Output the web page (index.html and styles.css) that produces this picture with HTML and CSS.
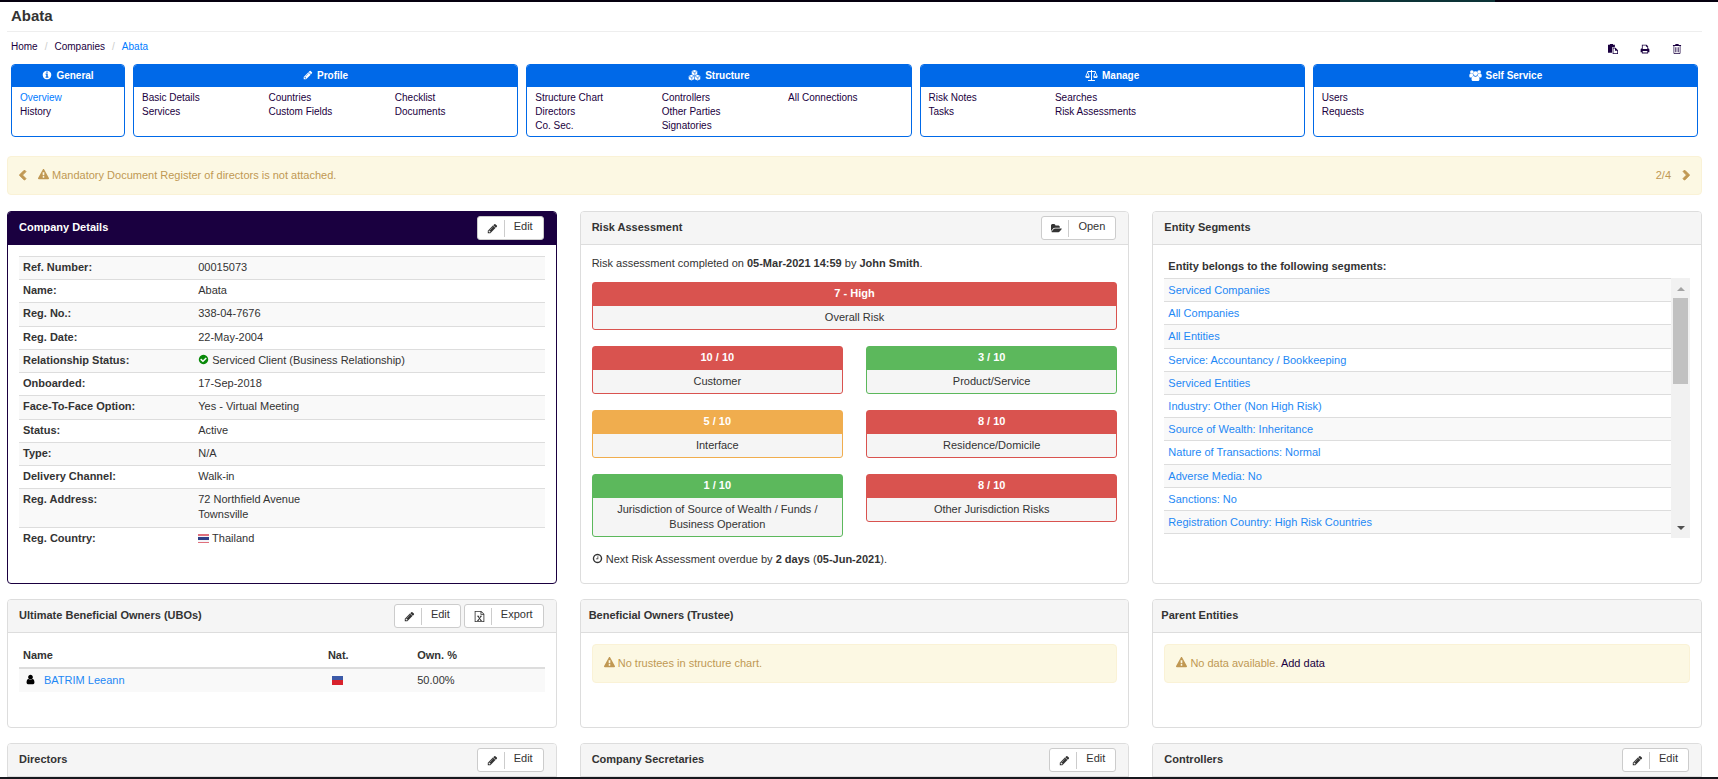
FILE: index.html
```html
<!DOCTYPE html>
<html lang="en">
<head>
  <meta charset="UTF-8" />
  <meta name="viewport" content="width=device-width, initial-scale=1.0"/>
  <title>Abata - Overview</title>
  <link rel="stylesheet" href="styles.css">
</head>
<body>
  <!-- icon set -->
  <svg class="sprite" aria-hidden="true">
    <symbol id="i-pencil" viewBox="0 0 1792 1792"><path d="M491 1536l91-91-235-235-91 91v107h128v128h107zm523-928q0-22-22-22-10 0-17 7l-542 542q-7 7-7 17 0 22 22 22 10 0 17-7l542-542q7-7 7-17zm-54-192l416 416-832 832h-416v-416zm683 96q0 53-37 90l-166 166-416-416 166-165q36-38 90-38 53 0 91 38l235 234q37 39 37 91z"/></symbol>
    <symbol id="i-warning" viewBox="0 0 1792 1792"><path d="M1024 1375v-190q0-14-9.500-23.500t-22.500-9.500h-192q-13 0-22.500 9.500t-9.500 23.500v190q0 14 9.500 23.500t22.500 9.500h192q13 0 22.500-9.500t9.500-23.500zm-2-374l18-459q0-12-10-19-13-11-24-11h-220q-11 0-24 11-10 7-10 21l17 457q0 10 10 16.500t24 6.500h185q14 0 23.500-6.500t10.500-16.500zm-14-934l768 1408q35 63-2 126-17 29-46.500 46t-63.500 17h-1536q-34 0-63.500-17t-46.500-46q-37-63-2-126l768-1408q17-31 47-49t65-18 65 18 47 49z"/></symbol>
    <symbol id="i-info" viewBox="0 0 1792 1792"><path d="M1152 1376v-160q0-14-9-23t-23-9h-96v-512q0-14-9-23t-23-9h-320q-14 0-23 9t-9 23v160q0 14 9 23t23 9h96v320h-96q-14 0-23 9t-9 23v160q0 14 9 23t23 9h448q14 0 23-9t9-23zm-128-896v-160q0-14-9-23t-23-9h-192q-14 0-23 9t-9 23v160q0 14 9 23t23 9h192q14 0 23-9t9-23zm640 416q0 209-103 385.500t-279.500 279.500-385.500 103-385.500-103-279.500-279.500-103-385.500 103-385.500 279.500-279.500 385.500-103 385.500 103 279.500 279.500 103 385.500z"/></symbol>
    <symbol id="i-check" viewBox="0 0 1792 1792"><path d="M1412 734q0-28-18-46l-91-90q-19-19-45-19t-45 19l-408 407-226-226q-19-19-45-19t-45 19l-91 90q-18 18-18 46 0 27 18 45l362 362q19 19 45 19 27 0 46-19l543-543q18-18 18-45zm252 162q0 209-103 385.500t-279.500 279.500-385.500 103-385.500-103-279.500-279.500-103-385.500 103-385.500 279.500-279.500 385.500-103 385.500 103 279.500 279.500 103 385.500z"/></symbol>
    <symbol id="i-clock" viewBox="0 0 1792 1792"><path d="M1024 544v448q0 14-9 23t-23 9h-320q-14 0-23-9t-9-23v-64q0-14 9-23t23-9h224v-352q0-14 9-23t23-9h64q14 0 23 9t9 23zm416 352q0-148-73-273t-198-198-273-73-273 73-198 198-73 273 73 273 198 198 273 73 273-73 198-198 73-273zm224 0q0 209-103 385.500t-279.500 279.500-385.500 103-385.500-103-279.500-279.500-103-385.500 103-385.500 279.500-279.500 385.500-103 385.500 103 279.500 279.500 103 385.500z"/></symbol>
    <symbol id="i-left" viewBox="0 0 1792 1792"><path d="M1427 301l-531 531 531 531q19 19 19 45t-19 45l-166 166q-19 19-45 19t-45-19l-742-742q-19-19-19-45t19-45l742-742q19-19 45-19t45 19l166 166q19 19 19 45t-19 45z"/></symbol>
    <symbol id="i-user" viewBox="0 0 1792 1792"><path d="M1536 1399q0 109-62.500 187t-150.500 78h-854q-88 0-150.500-78t-62.500-187q0-85 8.500-160.500t31.500-152 58.500-131 94-89 134.500-34.500q131 128 313 128t313-128q76 0 134.500 34.500t94 89 58.500 131 31.500 152 8.500 160.500zm-256-887q0 159-112.500 271.500t-271.500 112.500-271.500-112.500-112.500-271.500 112.500-271.500 271.500-112.500 271.500 112.500 112.500 271.500z"/></symbol>
    <symbol id="i-folder" viewBox="0 0 1920 1792"><path d="M1879 952q0 31-31 66l-336 396q-43 51-120.500 86.500t-143.500 35.500h-1088q-34 0-60.500-13t-26.500-43q0-31 31-66l336-396q43-51 120.500-86.500t143.500-35.500h1088q34 0 60.500 13t26.500 43zm-343-344v160h-832q-94 0-197 47.500t-164 119.500l-337 396-5 6v-985q0-92 66-158t158-66h320q92 0 158 66t66 158v32h544q92 0 158 66t66 158z"/></symbol>
    <symbol id="i-cubes" viewBox="0 0 18 16">
      <path d="M9 0l4 1.600v4.600L9 8 5 6.200V1.600z"/><path d="M4.600 7l4 1.700v4.700l-4 2-4-2V8.700z"/><path d="M13.400 7l4 1.700v4.700l-4 2-4-2V8.700z"/>
      <path class="cut" d="M9.500 4.200v2.600M5.100 11.200v2.800M13.900 11.200v2.800M5.800 2.400L9 3.700l3.200-1.300M1.400 9.500l3.200 1.300 3.200-1.300M10.200 9.500l3.200 1.300 3.200-1.300"/>
    </symbol>
    <symbol id="i-scale" viewBox="0 0 18 16"><path d="M8.300 0h1.400v1.500H15v1.200l3 6.600c0 1.600-1.500 2.400-3.200 2.400s-3.200-.8-3.200-2.400l2.600-6.500H9.700v11.700H14V16H4v-1.500h4.300V2.800H3.800l2.600 6.500c0 1.600-1.500 2.400-3.200 2.400S0 10.900 0 9.300l3-6.600V1.500h5.300zM3.200 4.400L1.400 9.200H5zm11.600 0L13 9.200h3.600z"/></symbol>
    <symbol id="i-users" viewBox="0 0 18 16"><circle cx="3.700" cy="2.800" r="2.600"/><circle cx="14.300" cy="2.800" r="2.600"/><circle cx="9" cy="5.200" r="3.400"/><path d="M0 8.400C0 6.300.6 4.900 1.800 5c1 .7 2.300.8 3.300.4C5 6.800 5.500 8 6.300 8.800 4.800 9 3.900 9.800 3.500 11H1.600C.5 11 0 10.100 0 8.400zM18 8.400c0-2.100-.6-3.500-1.800-3.400-1 .7-2.300.8-3.300.4.100 1.400-.4 2.600-1.200 3.400 1.500.2 2.400 1 2.800 2.200h1.900c1.100 0 1.600-.9 1.600-2.600z"/><path d="M3.200 13.400c0-2.900 1-4.900 3-4.700 1.700 1.300 3.900 1.300 5.600 0 2-.2 3 1.800 3 4.700 0 1.600-.9 2.600-2.300 2.600h-7c-1.400 0-2.300-1-2.300-2.600z"/></symbol>
    <symbol id="i-paste" viewBox="0 0 16 16"><path d="M0 1h3V0h5v1h3v4H6.500v9H0z"/><path d="M7.500 6h4.500l4 4v6H7.500zm1.200 1.200v7.600h6.100v-4h-3.600V7.200z" fill-rule="evenodd"/></symbol>
    <symbol id="i-print" viewBox="0 0 16 16"><path d="M3 1h7.500L13 3.500V7c1.300 0 2 .8 2 2v4h-2v2H3v-2H1V9c0-1.200.7-2 2-2zm1.300 1.300V8h7.400V4.500H9.500V2.300zM4.300 11v2.700h7.400V11z" fill-rule="evenodd"/></symbol>
    <symbol id="i-trash" viewBox="0 0 16 16"><path d="M5 1.500L5.700 0h4.600l.7 1.500h3.500V3h-1v11c0 1.200-.7 2-1.700 2H4.200c-1 0-1.700-.8-1.700-2V3h-1V1.500zM3.600 3v11.200c0 .4.200.7.500.7h7.800c.3 0 .5-.3.500-.7V3zM5.300 5h1v8h-1zm2.200 0h1v8h-1zm2.200 0h1v8h-1z" fill-rule="evenodd"/></symbol>
    <symbol id="i-excel" viewBox="0 0 14 16"><path d="M0 0h9.500L14 4.500V16H0zm1.200 1.200v13.600h11.600V5.600H8.500V1.200zm8.500.5v2.700h2.700zM3.500 7h3v1H6l1.100 1.700L8.200 8h-.6V7h2.900v1h-.8l-2 2.800 2 2.200h.8v1H7.700v-1h.4L7 11.900 5.900 13h.4v1H3.400v-1h.8l2.100-2.200L4.300 8h-.8z" fill-rule="evenodd"/></symbol>
  </svg>

  <div class="page">
    <div class="strip strip-top"></div>

    <main class="content">
      <h1>Abata</h1>

      <div class="topbar">
        <nav class="breadcrumb" aria-label="Breadcrumb">
          <a href="#">Home</a><span class="sep">/</span><a href="#">Companies</a><span class="sep">/</span><a href="#" class="active">Abata</a>
        </nav>
        <div class="tools">
          <button type="button" aria-label="Copy"><svg class="icon"><use href="#i-paste"/></svg></button>
          <button type="button" aria-label="Print"><svg class="icon"><use href="#i-print"/></svg></button>
          <button type="button" aria-label="Delete"><svg class="icon"><use href="#i-trash"/></svg></button>
        </div>
      </div>

      <nav class="menu" aria-label="Company">
        <section class="menu-card">
          <h2><svg class="icon"><use href="#i-info"/></svg>General</h2>
          <div class="menu-links">
            <ul><li><a href="#" class="active">Overview</a></li><li><a href="#">History</a></li></ul>
          </div>
        </section>
        <section class="menu-card">
          <h2><svg class="icon"><use href="#i-pencil"/></svg>Profile</h2>
          <div class="menu-links cols">
            <ul><li><a href="#">Basic Details</a></li><li><a href="#">Services</a></li></ul>
            <ul><li><a href="#">Countries</a></li><li><a href="#">Custom Fields</a></li></ul>
            <ul><li><a href="#">Checklist</a></li><li><a href="#">Documents</a></li></ul>
          </div>
        </section>
        <section class="menu-card">
          <h2><svg class="icon wide"><use href="#i-cubes"/></svg>Structure</h2>
          <div class="menu-links cols">
            <ul><li><a href="#">Structure Chart</a></li><li><a href="#">Directors</a></li><li><a href="#">Co. Sec.</a></li></ul>
            <ul><li><a href="#">Controllers</a></li><li><a href="#">Other Parties</a></li><li><a href="#">Signatories</a></li></ul>
            <ul><li><a href="#">All Connections</a></li></ul>
          </div>
        </section>
        <section class="menu-card">
          <h2><svg class="icon wide"><use href="#i-scale"/></svg>Manage</h2>
          <div class="menu-links cols">
            <ul><li><a href="#">Risk Notes</a></li><li><a href="#">Tasks</a></li></ul>
            <ul><li><a href="#">Searches</a></li><li><a href="#">Risk Assessments</a></li></ul>
          </div>
        </section>
        <section class="menu-card">
          <h2><svg class="icon wide"><use href="#i-users"/></svg>Self Service</h2>
          <div class="menu-links cols">
            <ul><li><a href="#">Users</a></li><li><a href="#">Requests</a></li></ul>
          </div>
        </section>
      </nav>

      <div class="alert notice">
        <button type="button" class="arrow" aria-label="Previous"><svg class="icon"><use href="#i-left"/></svg></button>
        <span class="notice-text"><svg class="icon"><use href="#i-warning"/></svg> Mandatory Document Register of directors is not attached.</span>
        <span>2/4</span>
        <button type="button" class="arrow next" aria-label="Next"><svg class="icon"><use href="#i-left"/></svg></button>
      </div>

      <div class="panels">
        <section class="panel tall primary">
          <header><h2>Company Details</h2>
            <button type="button" class="btn"><svg class="icon"><use href="#i-pencil"/></svg><span>Edit</span></button>
          </header>
          <div class="panel-body">
            <table class="details">
              <tr><th scope="row">Ref. Number:</th><td>00015073</td></tr>
              <tr><th scope="row">Name:</th><td>Abata</td></tr>
              <tr><th scope="row">Reg. No.:</th><td>338-04-7676</td></tr>
              <tr><th scope="row">Reg. Date:</th><td>22-May-2004</td></tr>
              <tr><th scope="row">Relationship Status:</th><td><svg class="icon ok"><use href="#i-check"/></svg> Serviced Client (Business Relationship)</td></tr>
              <tr><th scope="row">Onboarded:</th><td>17-Sep-2018</td></tr>
              <tr><th scope="row">Face-To-Face Option:</th><td>Yes - Virtual Meeting</td></tr>
              <tr><th scope="row">Status:</th><td>Active</td></tr>
              <tr><th scope="row">Type:</th><td>N/A</td></tr>
              <tr><th scope="row">Delivery Channel:</th><td>Walk-in</td></tr>
              <tr><th scope="row">Reg. Address:</th><td>72 Northfield Avenue<br>Townsville</td></tr>
              <tr><th scope="row">Reg. Country:</th><td><span class="flag thailand"></span> Thailand</td></tr>
            </table>
          </div>
        </section>

        <section class="panel tall">
          <header><h2>Risk Assessment</h2>
            <button type="button" class="btn"><svg class="icon"><use href="#i-folder"/></svg><span>Open</span></button>
          </header>
          <div class="panel-body">
            <p class="risk-note">Risk assessment completed on <b>05-Mar-2021 14:59</b> by <b>John Smith</b>.</p>
            <div class="risks">
              <div class="risk high overall"><b>7 - High</b><span>Overall Risk</span></div>
              <div class="risk high"><b>10 / 10</b><span>Customer</span></div>
              <div class="risk low"><b>3 / 10</b><span>Product/Service</span></div>
              <div class="risk medium"><b>5 / 10</b><span>Interface</span></div>
              <div class="risk high"><b>8 / 10</b><span>Residence/Domicile</span></div>
              <div class="risk low"><b>1 / 10</b><span>Jurisdiction of Source of Wealth / Funds / Business Operation</span></div>
              <div class="risk high"><b>8 / 10</b><span>Other Jurisdiction Risks</span></div>
            </div>
            <p class="risk-next"><svg class="icon"><use href="#i-clock"/></svg> Next Risk Assessment overdue by <b>2 days</b> (<b>05-Jun-2021</b>).</p>
          </div>
        </section>

        <section class="panel tall">
          <header><h2>Entity Segments</h2></header>
          <div class="panel-body">
            <h3>Entity belongs to the following segments:</h3>
            <div class="segments">
              <ul>
                <li><a href="#">Serviced Companies</a></li>
                <li><a href="#">All Companies</a></li>
                <li><a href="#">All Entities</a></li>
                <li><a href="#">Service: Accountancy / Bookkeeping</a></li>
                <li><a href="#">Serviced Entities</a></li>
                <li><a href="#">Industry: Other (Non High Risk)</a></li>
                <li><a href="#">Source of Wealth: Inheritance</a></li>
                <li><a href="#">Nature of Transactions: Normal</a></li>
                <li><a href="#">Adverse Media: No</a></li>
                <li><a href="#">Sanctions: No</a></li>
                <li><a href="#">Registration Country: High Risk Countries</a></li>
              </ul>
              <div class="scrollbar" aria-hidden="true">
                <span class="up"></span>
                <span class="thumb"></span>
                <span class="down"></span>
              </div>
            </div>
          </div>
        </section>

        <section class="panel medium-height">
          <header><h2>Ultimate Beneficial Owners (UBOs)</h2>
            <button type="button" class="btn"><svg class="icon"><use href="#i-pencil"/></svg><span>Edit</span></button>
            <button type="button" class="btn"><svg class="icon"><use href="#i-excel"/></svg><span>Export</span></button>
          </header>
          <div class="panel-body">
            <table class="owners">
              <thead>
                <tr><th class="col-name">Name</th><th class="col-nat">Nat.</th><th>Own. %</th></tr>
              </thead>
              <tbody>
                <tr><td><svg class="icon person"><use href="#i-user"/></svg><a href="#">BATRIM Leeann</a></td><td class="nat"><span class="flag liechtenstein"></span></td><td>50.00%</td></tr>
              </tbody>
            </table>
          </div>
        </section>

        <section class="panel medium-height">
          <header class="tight"><h2>Beneficial Owners (Trustee)</h2></header>
          <div class="panel-body">
            <div class="alert"><svg class="icon"><use href="#i-warning"/></svg> No trustees in structure chart.</div>
          </div>
        </section>

        <section class="panel medium-height">
          <header class="tight"><h2>Parent Entities</h2></header>
          <div class="panel-body">
            <div class="alert"><svg class="icon"><use href="#i-warning"/></svg> No data available. <a href="#">Add data</a></div>
          </div>
        </section>

        <section class="panel">
          <header><h2>Directors</h2>
            <button type="button" class="btn"><svg class="icon"><use href="#i-pencil"/></svg><span>Edit</span></button>
          </header>
          <div class="panel-body"></div>
        </section>
        <section class="panel">
          <header><h2>Company Secretaries</h2>
            <button type="button" class="btn"><svg class="icon"><use href="#i-pencil"/></svg><span>Edit</span></button>
          </header>
          <div class="panel-body"></div>
        </section>
        <section class="panel">
          <header><h2>Controllers</h2>
            <button type="button" class="btn"><svg class="icon"><use href="#i-pencil"/></svg><span>Edit</span></button>
          </header>
          <div class="panel-body"></div>
        </section>
      </div>
    </main>

    <div class="strip"></div>
  </div>
</body>
</html>
```

FILE: styles.css
```css
* {
  box-sizing: border-box;
}
body {
  margin: 0;
  font-family: "Liberation Sans", Arial, Helvetica, sans-serif;
  font-size: 11px;
  line-height: 15px;
  color: #333;
  background: #fff;
}
h1, h2, h3, p, ul {
  margin: 0;
  padding: 0;
}
ul {
  list-style: none;
}
a {
  color: #1a0040;
  text-decoration: none;
}
a:hover {
  text-decoration: underline;
}
button {
  font: inherit;
  color: inherit;
  cursor: pointer;
}
table {
  width: 100%;
  border-collapse: collapse;
}
th {
  text-align: left;
}

.sprite {
  display: none;
}
.icon {
  width: 11px;
  height: 11px;
  fill: currentColor;
  vertical-align: -1px;
}
.cut {
  fill: none;
  stroke: #0069e8;
}

.page {
  display: flex;
  flex-direction: column;
  height: 100vh;
}
.strip {
  flex: none;
  height: 2px;
  background: #18181e;
}
.strip-top {
  background: linear-gradient(90deg, #05000f 78%, #0c3236 78%, #0c3236 87%, #05000f 87%);
}
.content {
  flex: 1;
  min-height: 0;
  overflow: hidden;
  padding: 0 16px 0 7px;
}

h1 {
  padding: 4px 4px 5px;
  font-size: 15px;
  line-height: 20px;
  border-bottom: 1px solid #eee;
}

.topbar {
  display: flex;
  justify-content: space-between;
  height: 32px;
  padding: 7px 20px 0 4px;
}
.breadcrumb {
  font-size: 10px;
}
.breadcrumb .sep {
  padding: 0 7px;
  color: #ccc;
}
.breadcrumb .active,
.menu .active {
  color: #007bff;
}
.tools {
  display: flex;
  gap: 22px;
  padding-top: 5px;
}
.tools button {
  display: flex;
  padding: 0;
  border: 0;
  background: none;
  color: #1a0040;
  height: 11px;
}
.tools .icon {
  width: 10px;
  height: 10px;
}

/* section menu */
.menu {
  display: grid;
  grid-template-columns: 114px repeat(4, 1fr);
  gap: 8px;
  padding: 0 4px;
  font-size: 10px;
}
.menu-card {
  border: 1px solid #0069e8;
  border-radius: 4px;
  overflow: hidden;
}
.menu-card h2 {
  display: flex;
  align-items: center;
  justify-content: center;
  gap: 4px;
  height: 22px;
  padding-bottom: 2px;
  font-size: 10px;
  color: #fff;
  background: #0069e8;
}
.menu-card .icon {
  width: 10px;
  height: 10px;
}
.menu-card .icon.wide {
  width: 13px;
  height: 11px;
}
.menu-links {
  min-height: 49px;
  padding: 4px 0 3px 4px;
  line-height: 14px;
}
.menu-links.cols {
  display: grid;
  grid-template-columns: repeat(3, 1fr);
}
.menu-links li {
  padding-left: 4px;
}

.alert {
  padding: 11px;
  border: 1px solid #faf2d6;
  border-radius: 4px;
  background: #fcf8e3;
  color: #c09853;
}
.notice {
  display: flex;
  align-items: center;
  gap: 10px;
  margin: 19px 0 16px;
  padding: 11px 9px;
}
.notice-text {
  flex: 1;
}
.arrow {
  display: flex;
  padding: 0;
  border: 0;
  background: none;
}
.arrow .icon {
  stroke: currentColor;
  stroke-width: 160px;
}
.arrow.next {
  transform: scaleX(-1);
}

/* panels */
.panels {
  display: grid;
  grid-template-columns: repeat(3, 1fr);
  gap: 15px 23px;
}
.panel {
  border: 1px solid #ddd;
  border-radius: 4px;
}
.panel.tall {
  min-height: 373px;
}
.panel.medium-height {
  min-height: 129px;
}
.panel header {
  display: flex;
  align-items: center;
  gap: 3px;
  height: 33px;
  padding: 0 12px 0 11px;
  border-bottom: 1px solid #ddd;
  border-radius: 3px 3px 0 0;
  background: #f5f5f5;
}
.panel header.tight {
  padding: 0 8px;
}
.panel h2 {
  flex: 1;
  padding-bottom: 2px;
  font-size: 11px;
}
.panel.primary {
  border-color: #1a0040;
}
.panel.primary header {
  border-color: #1a0040;
  background: #1a0040;
}
.panel.primary h2 {
  color: #fff;
}
.panel-body {
  min-height: 24px;
  padding: 11px;
}
.panel-body li a,
.owners a {
  color: #1e88f5;
}

.btn {
  display: flex;
  align-items: center;
  height: 24px;
  padding: 0 10px 0 9px;
  border: 1px solid #ccc;
  border-radius: 3px;
  background: #fff;
  color: #333;
}
.btn span {
  height: 17px;
  margin-left: 6px;
  padding-left: 9px;
  border-left: 1px solid #ccc;
  line-height: 13px;
}

.details {
  height: 294px;
}
.details th,
.details td {
  padding: 3px 4px 4px;
  border-top: 1px solid #ddd;
  vertical-align: top;
}
.details th {
  width: calc(100% / 3);
}
.details tr:nth-child(odd) {
  background: #f9f9f9;
}
.ok {
  color: #0a8a0a;
}
.flag {
  display: inline-block;
  width: 11px;
  height: 9px;
  vertical-align: -1px;
}
.thailand {
  background: linear-gradient(#e0707c 17%, #f4f4f8 17%, #f4f4f8 34%, #2f3f86 34%, #2f3f86 67%, #f4f4f8 67%, #f4f4f8 84%, #e0707c 84%);
}
.liechtenstein {
  background: linear-gradient(#3c5aa8 50%, #d8222c 50%);
}

.owners th,
.owners td {
  padding: 4px;
}
.owners th {
  border-bottom: 2px solid #ddd;
}
.owners tbody tr {
  background: #f9f9f9;
}
.col-name {
  width: 58%;
}
.col-nat {
  width: 17%;
}
.owners .nat {
  padding-left: 8px;
}
.person {
  margin: 0 8px 0 2px;
  color: #000;
}

/* risk scores */
.risk-note {
  margin-bottom: 11px;
}
.risks {
  display: grid;
  grid-template-columns: 1fr 1fr;
  align-items: start;
  gap: 16px 23px;
}
.risk {
  border: 1px solid;
  border-radius: 3px;
  text-align: center;
  background: #f5f5f5;
}
.risk b,
.risk span {
  display: block;
  padding: 4px 20px;
}
.risk b {
  padding: 3px 20px 5px;
  color: #fff;
}
.overall {
  grid-column: span 2;
}
.high {
  border-color: #d9534f;
}
.high b {
  background: #d9534f;
}
.medium {
  border-color: #f0ad4e;
}
.medium b {
  background: #f0ad4e;
}
.low {
  border-color: #5cb85c;
}
.low b {
  background: #5cb85c;
}
.risk-next {
  margin-top: 15px;
}

/* entity segments */
.panel h3 {
  padding: 3px 4px 4px;
  font-size: 11px;
}
.segments {
  display: flex;
  height: 260px;
}
.segments ul {
  flex: 1;
  display: flex;
  flex-direction: column;
  height: 256px;
  border-top: 1px solid #ddd;
}
.segments li {
  flex: 1;
  padding: 4px 4px 3px;
  border-bottom: 1px solid #ddd;
}
.segments li:nth-child(odd) {
  background: #f9f9f9;
}
.scrollbar {
  display: flex;
  flex-direction: column;
  align-items: center;
  width: 19px;
  padding: 9px 0 8px;
  background: #f1f1f1;
}
.up,
.down {
  border: 4px solid transparent;
}
.up {
  border-top: 0;
  border-bottom-color: #a3a3a3;
}
.down {
  margin-top: auto;
  border-bottom: 0;
  border-top-color: #505050;
}
.thumb {
  width: 15px;
  height: 86px;
  margin-top: 7px;
  background: #c1c1c1;
}
```
